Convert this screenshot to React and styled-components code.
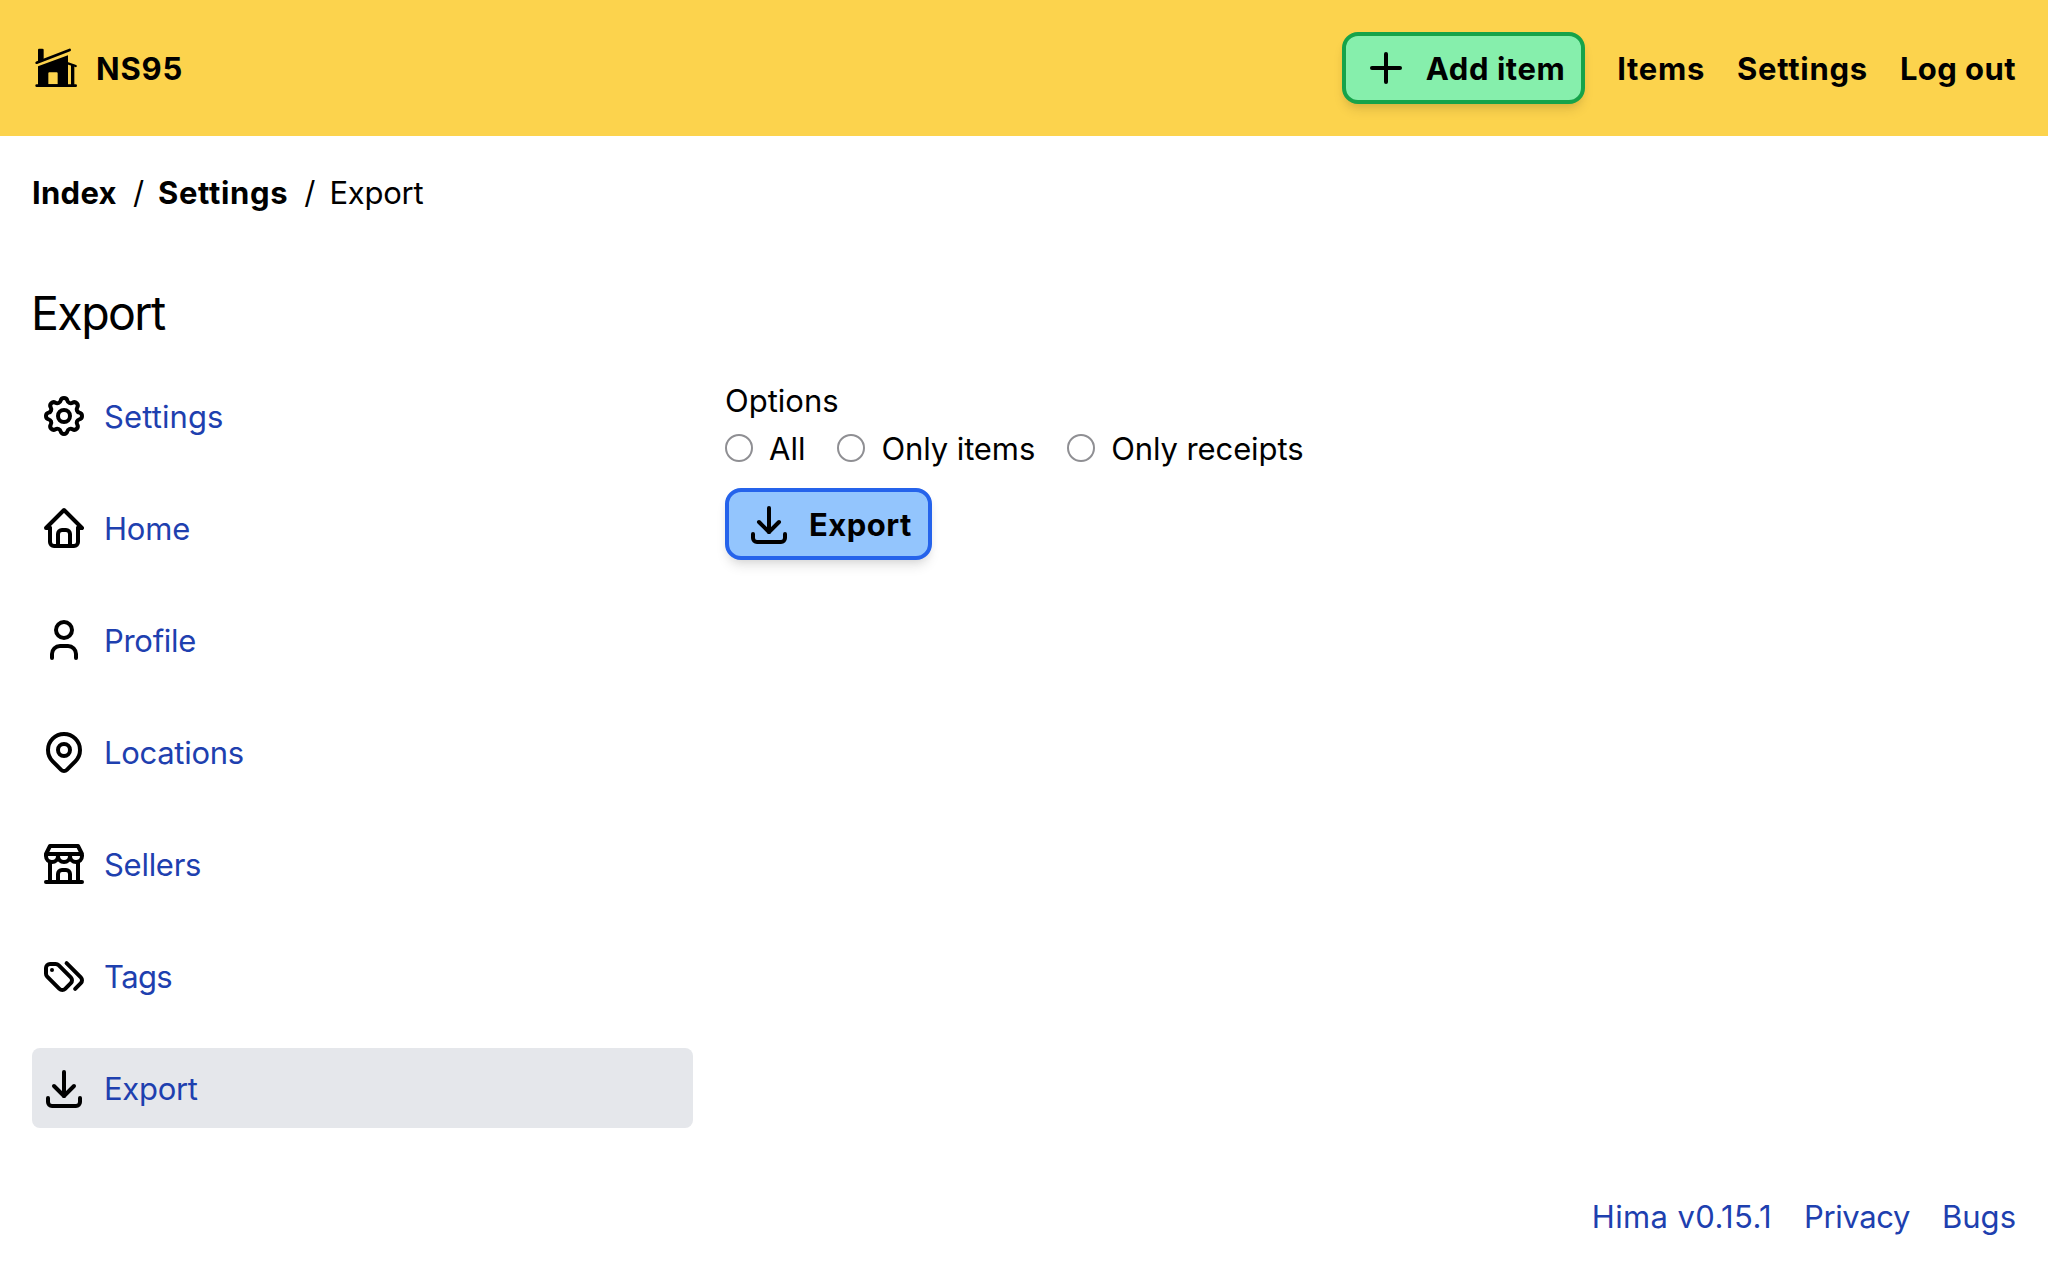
import React from "react";
import styled, { createGlobalStyle } from "styled-components";
import {
  TbSettings, TbHome, TbUser, TbMapPin, TbBuildingStore, TbDownload, TbPlus,
} from "react-icons/tb";

const GlobalStyle = createGlobalStyle`
  *, *::before, *::after { box-sizing: border-box; }
  body { margin: 0; background: #fff; color: #000; font: 400 31px/48px Inter, "Liberation Sans", sans-serif; }
  a { color: inherit; text-decoration: none; }
`;
const Page = styled.div`min-height: 1284px; display: flex; flex-direction: column;`;
const Header = styled.header`
  height: 136px; padding: 0 32px; background: #fcd34d;
  display: flex; align-items: center; justify-content: space-between;
`;
const Brand = styled.a`display: flex; align-items: center; gap: 16px;`;
const Nav = styled.nav`display: flex; align-items: center; gap: 32px;`;
const Text = styled.span`
  display: block; margin: 1px 0 -1px; white-space: nowrap;
  font-weight: ${(p) => (p.$bold ? 700 : "inherit")};
  letter-spacing: ${(p) => p.$ls || 0}px;
`;
const Button = styled.button`
  display: inline-flex; align-items: center; gap: 16px; height: 72px; padding: 0 16px;
  border: 4px solid ${(p) => p.$border}; background: ${(p) => p.$fill}; border-radius: 16px;
  box-shadow: 0 8px 12px -2px rgb(0 0 0 / 0.1), 0 4px 8px -4px rgb(0 0 0 / 0.1);
  font: inherit; color: #000;
  svg { width: 48px; height: 48px; }
`;
const Crumbs = styled.nav`display: flex; gap: 16px; padding: 32px 32px 0;`;
const Title = styled.h1`
  margin: 0; padding: 56px 31px 0; font-weight: 400; font-size: 46.5px; line-height: 80px;
`;
const Columns = styled.div`display: flex; gap: 32px; padding: 24px 32px 0;`;
const Side = styled.nav`width: 661px; display: flex; flex-direction: column; gap: 32px;`;
const SideLink = styled.a`
  display: flex; align-items: center; gap: 16px; height: 80px; padding: 0 8px; border-radius: 8px;
  background: ${(p) => (p.$active ? "#e5e7eb" : "transparent")};
  color: #1e40af;
  svg { width: 48px; height: 48px; color: #000; }
`;
const Form = styled.form`display: flex; flex-direction: column; align-items: flex-start;`;
const Radios = styled.div`display: flex; gap: 32px; margin-bottom: 16px;`;
const Option = styled.label`display: flex; align-items: center; gap: 16px;`;
const Radio = styled.input`
  appearance: none; margin: 0; width: 28px; height: 28px;
  border: 2px solid #8f8f93; border-radius: 50%; background: #fff;
`;
const Footer = styled.footer`
  display: flex; justify-content: flex-end; gap: 32px; padding: 64px 32px 0; color: #1e40af;
`;

const Logo = () => (
  <svg width="48" height="48" viewBox="12 12 144 144">
    <path d="M30 29q0-3 3-3h10q4 0 4 3v32L30 66z" />
    <path d="M26 68L125 30" stroke="#000" strokeWidth="8" strokeLinecap="round" />
    <path fillRule="evenodd" d="M30 79L120 46V136H30zM64 97q-3 0-3 3V133H89V100q0-3-3-3z" />
    <path d="M120 70L143 78" stroke="#000" strokeWidth="7" strokeLinecap="round" />
    <path d="M129 74h10v62h-10z" />
    <path d="M26 137H143" stroke="#000" strokeWidth="8" strokeLinecap="round" />
  </svg>
);

const Tags = () => (
  <svg viewBox="0 0 24 24" fill="none" stroke="currentColor" strokeWidth="2" strokeLinecap="round" strokeLinejoin="round">
    <path d="M7.859 6h-2.834a2.025 2.025 0 0 0 -2.025 2.025v2.834c0 .537 .213 1.052 .593 1.432l6.116 6.116a2.025 2.025 0 0 0 2.864 0l2.834 -2.834a2.025 2.025 0 0 0 0 -2.864l-6.117 -6.116a2.025 2.025 0 0 0 -1.431 -.593z" />
    <path d="M17.573 18.407l2.834 -2.834a2.025 2.025 0 0 0 0 -2.864l-7.117 -7.116" />
    <path d="M6 9h-.01" />
  </svg>
);

const links = [
  { name: "Settings", Icon: TbSettings, ls: 0.1 },
  { name: "Home", Icon: TbHome, ls: -0.2 },
  { name: "Profile", Icon: TbUser, ls: -0.3 },
  { name: "Locations", Icon: TbMapPin, ls: -0.3 },
  { name: "Sellers", Icon: TbBuildingStore, ls: -0.28 },
  { name: "Tags", Icon: Tags, ls: -0.6 },
  { name: "Export", Icon: TbDownload, ls: -0.3 },
];

const options = [
  { name: "All", ls: 0 },
  { name: "Only items", ls: -0.1 },
  { name: "Only receipts", ls: -0.1 },
];

export default function App() {
  return (
    <Page>
      <GlobalStyle />
      <Header>
        <Brand href="#"><Logo /><Text $bold $ls={0.8}>NS95</Text></Brand>
        <Nav>
          <Button type="button" $fill="#86efac" $border="#16a34a">
            <TbPlus /><Text $bold $ls={0.55}>Add item</Text>
          </Button>
          <a href="#"><Text $bold $ls={0.65}>Items</Text></a>
          <a href="#"><Text $bold $ls={0.75}>Settings</Text></a>
          <a href="#"><Text $bold $ls={0.42}>Log out</Text></a>
        </Nav>
      </Header>
      <Crumbs>
        <a href="#"><Text $bold $ls={0.3}>Index</Text></a>
        <Text $ls={-2}>/</Text>
        <a href="#"><Text $bold $ls={0.65}>Settings</Text></a>
        <Text $ls={-2}>/</Text>
        <Text $ls={-0.25}>Export</Text>
      </Crumbs>
      <Title><Text $ls={-1.6}>Export</Text></Title>
      <Columns>
        <Side>
          {links.map(({ name, Icon, ls }) => (
            <SideLink key={name} href="#" $active={name === "Export"}>
              <Icon /><Text $ls={ls}>{name}</Text>
            </SideLink>
          ))}
        </Side>
        <Form>
          <Text>Options</Text>
          <Radios>
            {options.map(({ name, ls }) => (
              <Option key={name}><Radio type="radio" name="scope" /><Text $ls={ls}>{name}</Text></Option>
            ))}
          </Radios>
          <Button type="button" $fill="#93c5fd" $border="#2563eb">
            <TbDownload /><Text $bold $ls={0.5}>Export</Text>
          </Button>
        </Form>
      </Columns>
      <Footer>
        <a href="#"><Text $ls={0.38}>Hima v0.15.1</Text></a>
        <a href="#"><Text $ls={-0.39}>Privacy</Text></a>
        <a href="#"><Text>Bugs</Text></a>
      </Footer>
    </Page>
  );
}
